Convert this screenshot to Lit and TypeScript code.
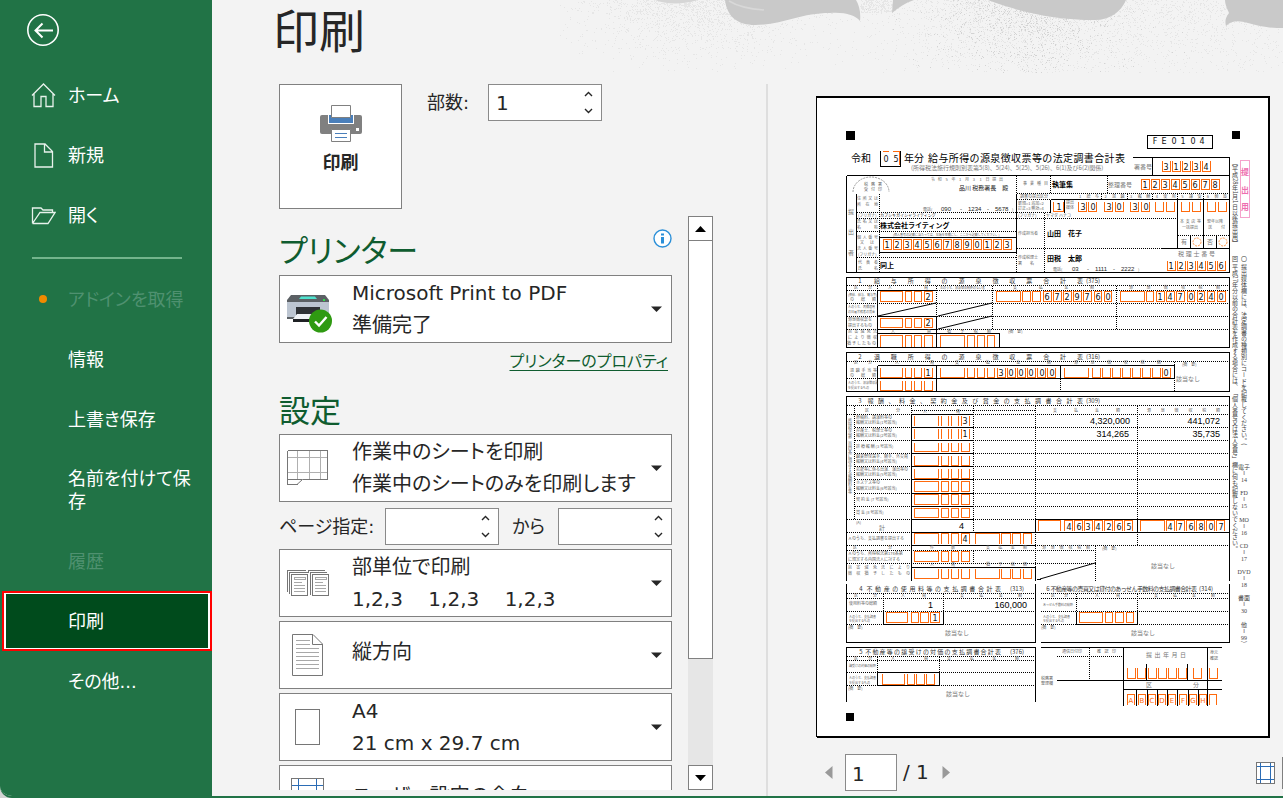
import { LitElement, html, svg, css } from "lit";
import { customElement, state } from "lit/decorators.js";
import { classMap } from "lit/directives/class-map.js";

type Box = [number, number];

/* ---------- helpers for the previewed tax form ---------- */

// Characters spread evenly between two x positions (distributed alignment).
const spread = (text: string, x1: number, x2: number, y: number, cls = "tiny") => {
  const chars = [...text];
  const step = chars.length > 1 ? (x2 - x1) / (chars.length - 1) : 0;
  return svg`<text class=${cls} text-anchor="middle" y=${y} x=${chars.map((_, i) => Math.round((x1 + step * i) * 10) / 10).join(" ")}>${text}</text>`;
};
const put = (text: string, x: number, y: number, cls = "tiny") => svg`<text class=${cls} x=${x} y=${y}>${text}</text>`;
const digits = (text: string, xs: number[], y: number) =>
  svg`<text class="digit" text-anchor="middle" y=${y} x=${xs.join(" ")}>${text}</text>`;
const comb = (start: number, count: number, step = 10): number[] =>
  Array.from({ length: count }, (_, i) => start + Math.round(i * step));

// Entry cells: "o" closed, "u" open at the top, "n" open at the bottom, "v" sides only.
const cells = (boxes: Box[], y1: number, y2: number, kind = "o") =>
  boxes
    .map(([a, b]) => {
      if (kind === "u") return `M${a} ${y1}V${y2}H${b}V${y1}`;
      if (kind === "n") return `M${a} ${y2}V${y1}H${b}V${y2}`;
      if (kind === "v") return `M${a} ${y1}V${y2}M${b} ${y1}V${y2}`;
      return `M${a} ${y1}H${b}V${y2}H${a}z`;
    })
    .join("");
const run = (start: number, count: number): Box[] => comb(start, count).map((x) => [x, x + 8] as Box);

const COUNT: Box[] = [[880, 902], [905, 911], [914, 921], [924, 932]];
const SUM: Box[] = [[940, 964], [967, 974], [977, 984], [987, 994]];
const ROW3: Box[] = [[914, 938], [941, 948], [951, 958], [961, 969]];
const ROW3B: Box[] = [[975, 999], [1001, 1010], [1012, 1020], [1023, 1031]];

const ORANGE = [
  "M882 151H888M892 151H899V164",
  cells(run(1162, 5), 160, 171, "u"),
  cells(run(1141, 8), 179, 189),
  cells([[1053, 1063], [1078, 1086], [1088, 1096], [1104, 1112], [1115, 1123], [1130, 1138], [1141, 1149], [1155, 1163], [1166, 1174], [1181, 1189], [1192, 1200], [1207, 1215], [1218, 1226]], 201, 211, "u"),
  cells(run(1167, 6), 260, 270, "u"),
  cells(run(883, 13), 239, 249),
  cells(COUNT, 291, 301),
  cells(COUNT, 318, 327),
  cells(COUNT, 335, 346, "n"),
  cells(SUM, 335, 346, "n"),
  cells([[996, 1020], [1022, 1030], [1032, 1040], ...run(1043, 5), [1094, 1101], [1104, 1111]], 291, 301),
  cells([[1120, 1144], [1146, 1153], ...run(1156, 3), [1187, 1194], [1197, 1204], [1207, 1214], [1217, 1225]], 291, 301),
  cells(COUNT, 367, 377, "u"),
  cells(COUNT, 380, 390, "u"),
  cells([...SUM, ...run(997, 6)], 367, 377, "u"),
  cells([[1064, 1088], ...run(1092, 8)], 367, 377, "u"),
  cells(ROW3, 415, 425, "v"),
  cells(ROW3, 428, 438, "v"),
  cells(ROW3, 442, 451, "u"),
  cells(ROW3, 455, 465, "u"),
  cells(ROW3, 468, 478, "u"),
  cells(ROW3, 481, 491),
  cells(ROW3, 494, 504),
  cells(ROW3, 508, 517),
  cells([[1038, 1060], ...run(1064, 7)], 520, 530, "n"),
  cells([[1140, 1164], ...run(1166, 6)], 520, 530, "n"),
  cells([...ROW3, ...ROW3B], 533, 543, "n"),
  cells(ROW3, 551, 561),
  cells([...ROW3, ...ROW3B], 568, 578, "u"),
  cells([[886, 907], [911, 918], [920, 928], [930, 939]], 612, 622),
  cells([[1079, 1102], [1105, 1112], [1115, 1123], [1126, 1133]], 612, 622),
  cells([[882, 904], [907, 914], [916, 924], [926, 934]], 673, 684, "u"),
  cells([[1127, 1135], [1137, 1145], [1148, 1156], [1158, 1166], [1168, 1176], [1178, 1186], [1193, 1201], [1209, 1217]], 667, 678, "u"),
  cells([[1127, 1134], [1138, 1145], [1148, 1155], [1158, 1165], [1168, 1175], [1179, 1186], [1189, 1196], [1199, 1206], [1209, 1216]], 694, 704, "n"),
].join("");

const SOLID = [
  "M880 150V166H900V150M1147 135H1212V148H1147z",
  "M1132 157H1229V272M1152 157V175M846 175H1229M846 175V272H1229",
  "M856 193V272M879 237H1016V252H879zM1016 193V252",
  "M1050 199H1229M1050 199V212M1064 199V212M1160 248H1229M1177 199V248M1203 199V248M1190 235V248M1216 235V248",
  "M846 277H1229V347H846zM877 290V347M936 316V347M877 316H936M877 329H936M877 333H999V347M877 290H936",
  "M846 352H1229V391H846zM877 365H1174V378H877M877 365V391M936 365V391M1060 365V378",
  "M846 580V396H1229V580M911 414V580M911 414H973M911 427H973M911 440H973M911 453H973M911 466H973M911 479H973M911 493H973M911 506H973",
  "M911 519H973M1035 519H1229M911 532H1229M1035 519V532M1137 519V532M911 545H1035M911 567H1035V580M1036 579H1040",
  "M846 583V642H1035V583M883 611V624H943V611M1040 642H1229V583M1076 611V624H1137V611",
  "M846 701V647H1035V701M877 672H939V685H877z",
  "M1040 647H1221M1056 680H1221M1123 647V705M1207 647V705M1123 689H1221M1146 663V680M1187 663V680",
  "M1136 689V705M1147 689V705M1157 689V705M1167 689V705M1177 689V705M1188 689V705M1198 689V705",
].join("");
const DIAGONALS = "M878 316L936 303M938 316L992 303M938 329L992 316M1040 579L1095 563";

const DOTTED = [
  "M879 193V237M879 252V272M856 212H1016M856 218H1016M856 231H1016M856 257H1016M1016 175V193M1016 252V272",
  "M1016 193H1229M1016 199H1050M1016 212H1050M1016 218H1175M1016 248H1160M1044 212V272M1177 235H1229M1050 175V193M1107 175V193",
  "M1101 193V199M1127 193V199M1152 193V199M1177 193V199M1203 193V199",
  "M846 285H1229M846 290H1229M846 303H1229M846 316H1229M846 329H1229M877 285V290M936 285V316M992 285V329M1116 285V329",
  "M846 361H1229M846 378H878M1060 378V391M1174 361V391",
  "M846 405H1229M911 410H1035M846 414H1229M854 427H1229M854 440H1229M854 453H1229M854 466H1229M854 479H1229M854 493H1229M854 506H1229M846 519H1035",
  "M854 405V519M911 405V414M973 405V532M1035 405V580M1137 405V545M846 532H911M846 545H1229M846 550H1095M846 563H1095M1095 545V580M973 550V563",
  "M846 593H1035M846 598H1035M846 611H1035M846 624H1035M883 593V611M943 593V611",
  "M1040 593H1229M1040 598H1229M1040 611H1229M1040 624H1229M1076 593V611M1137 593V624",
  "M846 656H1035M846 660H1035M846 672H1035M846 685H1035M877 656V672M939 656V672M1056 656H1121M1089 647V680",
].join("");

const ROW_LABELS: [string, number][] = [
  ["原稿料、講演料等の", 419], ["報酬又は料金(1号該当)", 424],
  ["弁護士、税理士等の", 432], ["報酬又は料金(2号該当)", 437],
  ["診 療 報 酬 (3 号該当)", 448],
  ["職業野球選手、騎手、外交員", 458], ["報酬又は料金(4号該当)", 463],
  ["芸能等に係る出演、演出等の", 471], ["報酬又は料金(5号該当)", 476],
  ["ホステス等の", 484], ["報酬又は料金(6号該当)", 490],
  ["契 約 金 (7 号該当)", 501], ["賞 金 (8 号該当)", 514],
];

const form = svg`
  <rect class="sheet" x="816" y="96" width="454" height="642"></rect>
  <path d="M846 131h9v9h-9zM1232 131h8v8h-8zM846 713h8v8h-8z"></path>
  <g class="lines" transform="translate(.5 .5)">
    <path class="cell" d=${ORANGE}></path>
    <path class="dot" d=${DOTTED}></path>
    <path class="solid" d=${SOLID}></path>
  </g>
  <path class="solid slant" d=${DIAGONALS}></path>
  <path class="arc" d="M853 192a18 15 0 0 1 36 0"></path>
  <circle class="ring" cx="1197" cy="242" r="4"></circle>
  <circle class="ring" cx="1223" cy="242" r="4"></circle>

  ${digits("FE0104", comb(1155, 6, 9.4), 144)}
  ${put("令和", 851, 162, "title")}
  ${digits("05", [886, 896], 162)}
  ${put("年分", 904, 162, "title")}
  ${spread("給与所得の源泉徴収票等の法定調書合計表", 933, 1120, 162, "title")}
  ${put("(所得税法施行規則別表第5(8)、5(24)、5(25)、5(26)、6(1)及び6(2)関係)", 911, 170, "note")}
  ${put("署番号", 1134, 169, "note")}
  ${digits("31234", comb(1166, 5), 170)}
  ${put("整理番号", 1108, 187, "note")}
  ${digits("12345678", comb(1145, 8), 188)}
  ${spread("令和5年1月31日提出", 933, 1001, 181)}
  ${put("品川 税務署長　殿", 959, 190, "note dark")}
  ${spread("税務署", 866, 880, 186)}
  ${spread("受付印", 866, 880, 191)}
  ${spread("事業種目", 1025, 1046, 185)}
  ${put("執筆集", 1052, 187, "bold")}
  ${put("提", 848, 214, "note")}${put("出", 848, 234, "note")}${put("者", 848, 255, "note")}
  ${spread("住所又は", 859, 876, 200)}${spread("所在地", 859, 876, 206)}
  ${put("電話(", 923, 211)}
  ${put("090", 941, 211, "phone")}${put("-", 960, 211, "phone")}${put("1234", 968, 211, "phone")}${put("-", 987, 211, "phone")}${put("5678", 995, 211, "phone")}${put(")", 1012, 211)}
  ${put("(フリガナ)", 858, 217)}${put("カブシキガイシャライティング", 880, 217, "tiny dark")}
  ${spread("氏名又は", 859, 876, 223)}${spread("名称", 859, 876, 229)}
  ${put("株式会社ライティング", 880, 228, "bold")}
  ${put("(個人番号の記載に当たっては、左端を空欄にし、ここから記載してください。)", 893, 236, "mini")}
  ${spread("個人番号", 859, 876, 239)}${spread("又は", 862, 872, 244)}${spread("法人番号", 859, 876, 250)}
  ${digits("1234567890123", comb(887, 13), 248)}
  ${put("(フリガナ)", 858, 256)}
  ${spread("代表者", 860, 876, 264)}${spread("氏名", 860, 876, 270)}
  ${put("同上", 880, 268, "bold")}
  ${put("調書の提出区分", 1020, 198)}${put("新規=1 追加=2", 1018, 205)}${put("訂正=3 無効=4", 1018, 210)}
  ${digits("1", [1059], 210)}
  ${put("提出", 1066, 204)}${put("媒体", 1066, 209)}
  ${spread("1給与2退職3報酬4使用5譲受6斡旋", 1080, 1225, 198)}
  ${digits("303030", [1083, 1093, 1109, 1119, 1135, 1146], 210)}
  ${put("(フリガナ)", 1018, 217)}${put("ヤマダ ハナコ", 1046, 217)}
  ${put("作成担当者", 1018, 235)}${put("山田　花子", 1047, 236, "bold")}
  ${spread("本支店等", 1182, 1199, 223)}${put("一括提出", 1182, 229)}
  ${put("翌年以降", 1207, 223)}${spread("送付", 1210, 1223, 229)}
  ${put("有", 1181, 244, "note")}${put("否", 1207, 244, "note")}
  ${spread("税理士番号", 1181, 1212, 256, "note")}
  ${put("作成税理士", 1018, 259)}${put("署　　名", 1018, 265)}
  ${put("田税　太郎", 1047, 261, "bold")}
  ${put("電話(", 1053, 271)}
  ${put("03", 1072, 271, "phone")}${put("-", 1087, 271, "phone")}${put("1111", 1095, 271, "phone")}${put("-", 1113, 271, "phone")}${put("2222", 1121, 271, "phone")}${put(")", 1138, 271)}
  ${digits("123456", comb(1171, 6), 269)}

  ${spread("1給与所得の源泉徴収票合計表", 860, 1080, 283, "head")}${put("(375)", 1086, 283, "head")}
  ${spread("区分", 856, 870, 289)}${spread("人員", 890, 926, 289)}${put("左のうち、源泉徴収税額のない者", 940, 289, "mini")}
  ${spread("支払金額", 1015, 1092, 289)}${spread("源泉徴収税額", 1131, 1218, 289)}
  ${put("(俸給、給与、賞与等)", 848, 296, "mini")}${spread("の総額", 852, 874, 301)}
  ${put("Ａのうち、丙欄適用", 848, 308, "mini")}${put("の日雇労務者の賃金", 848, 313, "mini")}
  ${put("源泉徴収票を", 848, 321)}${put("提出するもの", 848, 327)}
  ${spread("災害減免法", 850, 875, 333)}${spread("により徴収", 850, 875, 339)}${spread("猶予したもの", 849, 874, 345)}
  ${spread("人員", 893, 929, 333)}${spread("猶予税額", 949, 989, 333)}${put("(摘　要)", 1008, 333)}
  ${digits("2", [928], 300)}${digits("2", [928], 326)}
  ${digits("6729760", [1047, 1057, 1067, 1077, 1087, 1098, 1108], 300)}
  ${digits("1470240", [1160, 1170, 1180, 1191, 1201, 1211, 1221], 300)}

  ${spread("2退職所得の源泉徴収票合計表", 860, 1080, 359, "head")}${put("(316)", 1086, 359, "head")}
  ${spread("区分", 856, 870, 364)}${spread("人員", 897, 932, 364)}${spread("支払金額", 957, 1049, 364)}${spread("源泉徴収税額", 1076, 1159, 364)}
  ${put("(摘　要)", 1182, 366)}
  ${spread("退職手当等", 852, 875, 372)}${spread("の総額", 852, 874, 377)}
  ${put("Ａのうち、源泉徴収票", 848, 384, "mini")}${put("を提出するもの", 848, 389, "mini")}
  ${digits("1", [928], 376)}
  ${digits("300000", [1001, 1011, 1021, 1031, 1042, 1052], 376)}${digits("0", [1166], 376)}
  ${put("該当なし", 1176, 381, "note")}

  ${spread("3報酬、料金、契約金及び賞金の支払調書合計表", 860, 1080, 403, "head")}${put("(309)", 1086, 403, "head")}
  ${spread("区分", 867, 898, 412)}${spread("人員", 925, 958, 413)}${spread("支払金額", 1055, 1118, 412)}${spread("源泉徴収税額", 1149, 1218, 412)}
  ${ROW_LABELS.map(([t, y]) => put(t, 856, y))}
  <text class="tiny upright" x="850" y="418">所得税法第二百四条に規定する報酬料金等</text>
  ${digits("3", [965], 424)}${digits("1", [965], 437)}
  ${put("4,320,000", 1130, 424, "amount")}${put("441,072", 1220, 424, "amount")}
  ${put("314,265", 1129, 437, "amount")}${put("35,735", 1220, 437, "amount")}
  ${put("(A)", 856, 524)}${put("計", 879, 530, "note")}${put("4", 964, 529, "amount")}
  ${digits("4634265", [1069, 1079, 1088, 1098, 1109, 1119, 1129], 530)}
  ${digits("476807", [1170, 1180, 1191, 1201, 1211, 1221], 530)}
  ${put("Ａのうち、支払調書を提出する", 848, 540)}${digits("4", [965], 542)}
  ${spread("区分", 855, 890, 549)}${spread("件数", 932, 953, 549)}${spread("支払金額", 988, 1025, 549)}${spread("源泉徴収税額", 1044, 1088, 549)}
  ${put("Ａのうち、所得税法第174条第", 848, 555)}${put("に規定する内国法人に対する", 848, 561)}
  ${spread("災害減免法により", 850, 908, 569)}${spread("徴収猶予したもの", 850, 908, 575)}
  ${spread("人員", 932, 953, 566)}${spread("猶予税額", 988, 1025, 566)}
  ${put("(摘　要)", 1102, 550)}${put("該当なし", 1151, 568, "note")}

  ${spread("4不動産の使用料等の支払調書合計表", 861, 998, 591, "head")}${put("(313)", 1010, 591, "head")}
  ${spread("6不動産等の売買又は貸付のあっせん手数料の支払調書合計表", 1048, 1194, 591, "head")}${put("(314)", 1199, 591, "head")}
  ${spread("区分", 856, 875, 597)}${spread("人員", 903, 924, 597)}${spread("支払金額", 962, 1020, 597)}
  ${spread("区分", 1053, 1066, 597)}${spread("人員", 1097, 1118, 597)}${spread("支払金額", 1156, 1213, 597)}
  ${put("使用料等の総額", 849, 605)}${put("あっせん手数料の総額", 1043, 606, "mini")}
  ${put("Ａのうち、支払調書", 849, 618, "mini")}${put("を提出するもの", 849, 622, "mini")}
  ${put("Ａのうち、支払調書", 1043, 618, "mini")}${put("を提出するもの", 1043, 622, "mini")}
  ${put("1", 933, 608, "amount")}${put("160,000", 1027, 608, "amount")}${digits("1", [935], 621)}
  ${put("(摘　要)", 848, 629)}${put("該当なし", 945, 635, "note")}
  ${put("(摘　要)", 1041, 629)}${put("該当なし", 1131, 635, "note")}

  ${spread("5不動産等の譲受けの対価の支払調書合計表", 861, 998, 654, "head")}${put("(376)", 1010, 654, "head")}
  ${spread("区分", 856, 870, 660)}${spread("人員", 893, 926, 660)}${spread("支払金額", 949, 1017, 660)}
  ${put("譲受けの対価の総額", 849, 667, "mini")}${put("Ａのうち、支払調書", 849, 679, "mini")}${put("を提出するもの", 849, 684, "mini")}
  ${put("(摘　要)", 848, 690)}${put("該当なし", 946, 696, "note")}

  ${put("通信日付印", 1062, 653)}${spread("確認印", 1099, 1114, 653)}
  ${put("税務署", 1041, 680)}${put("整理欄", 1041, 685)}
  ${spread("提出年月日", 1149, 1183, 657, "note")}${put("身元", 1210, 654)}${put("確認", 1210, 660)}
  ${spread("区分", 1149, 1196, 687, "note")}
  <text class="letter" text-anchor="middle" y="703" x="1131 1142 1152 1162 1172 1183 1193 1203">ABCDEFGH</text>

  <rect class="tag" x="1240.5" y="160.5" width="9" height="57"></rect>
  <text class="pink" text-anchor="middle" x="1245" y="175">提</text>
  <text class="pink" text-anchor="middle" x="1245" y="193">出</text>
  <text class="pink" text-anchor="middle" x="1245" y="210">用</text>
  <text class="column" x="1235" y="160">【平成28年1月1日以後提出用】</text>
  <text class="column" x="1235" y="256">回 平成27年分以前の合計表を作成する場合には、「個人番号又は法人番号」欄に何も記載しないでください。</text>
  <text class="column" x="1244" y="256">〇 提出媒体欄には、法定調書の種類別にコードを記載してください。(</text>
  ${([["電子", 469, "14"], ["FD", 495, "15"], ["MO", 522, "16"], ["CD", 548, "17"], ["DVD", 574, "18"], ["書面", 600, "30"], ["他", 627, "99"]] as [string, number, string][]).map(
    ([t, y, n]) => svg`<text class="code" text-anchor="middle"><tspan x="1244" y=${y}>${t}</tspan><tspan x="1244" y=${y + 6}>‖</tspan><tspan x="1244" y=${y + 13}>${n}</tspan></text>`
  )}
  <text class="column" x="1244" y="641">)</text>
`;

/* ---------- speckled artwork behind the heading ---------- */

const speckles = (() => {
  let seed = 987654321;
  const rnd = () => {
    seed ^= seed << 13;
    seed ^= seed >>> 17;
    seed ^= seed << 5;
    return (seed >>> 0) / 4294967296;
  };
  const hump = (x: number, c: number, w: number) => Math.exp(-(((x - c) / w) ** 2));
  let light = "";
  let dark = "";
  for (let y = 0; y < 73; y++) {
    for (let x = 560; x < 1283; x++) {
      const fade = 1 - y / 85;
      const band = x > 860 && x < 893 && y < 13 ? 0.4 : 0;
      const density = (0.42 * hump(x, 1030, 95) + 0.36 * hump(x, 700, 90) * fade + 0.14 * hump(x, 1220, 80) + band) * fade;
      if (rnd() < density) {
        if (rnd() < 0.3 * hump(x, 1025, 80)) dark += `M${x} ${y}h1v1h-1z`;
        else light += `M${x} ${y}h1v1h-1z`;
      }
    }
  }
  return { light, dark };
})();

const artwork = html`<svg class="art" viewBox="560 0 723 84" width="723" height="84" aria-hidden="true">
  <path fill="#e6e6e6" d=${speckles.light}></path>
  <path fill="#d3d3d3" d=${speckles.dark}></path>
  <path fill="#d6d6d6" d="M655 0C665 4 682 5 698 0z"></path>
  <path fill="#c9c9c9" d="M725 0C727 17 738 25 755 25C782 25 800 13 830 13C845 12 855 15 860 21C861 12 859 5 856 0zM893 0L892 13C898 8 905 3 914 0zM988 0C1020 12 1055 20 1095 20C1110 20 1121 12 1126 0zM1225 0C1225 5 1228 10 1229 13C1225 18 1225 22 1226 26C1235 17 1246 23 1260 26C1270 28 1277 28 1283 28V0z"></path>
  <path fill="none" stroke="#d8d8d8" stroke-width="1.500" d="M729 1C737 6 750 9 764 10"></path>
</svg>`;

/* ---------- icons ---------- */

const icons: Record<string, unknown> = {
  home: svg`<path d="M1 12.5L12.5 1L24 12.5M3 11V23.5H10V13.5H15V23.5H22V11"></path>`,
  file: svg`<path d="M4 1H14L21.500 8.500V24H4zM13.500 1V9H21.500"></path>`,
  folder: svg`<path d="M1.500 20.500V5H10L12 7H21.500V9.500M1.500 20.500H17L24 9.500H9L1.500 20.500"></path>`,
  dot: svg`<circle class="orange" cx="12" cy="12" r="4"></circle>`,
};

const deviceIcon = svg`
  <path d="M5 17V15L9 10H43L47 15V17z" fill="#5b6064"></path>
  <path d="M17 14L19 11.500H33L35 14z" fill="#4fe3cf"></path>
  <rect x="41" y="14" width="2" height="2" fill="#2fe04b"></rect>
  <path d="M5 17H47V32H5z" fill="#bcc5d1"></path>
  <path d="M5 32H47V34H5z" fill="#5b6064"></path>
  <path d="M14 22H38V30H14z" fill="#2f3236"></path>
  <path d="M15 29H38V34H11z" fill="#f1f4f7"></path>
  <path d="M11 34H32V37H11z" fill="#1f2124"></path>
  <circle cx="38.500" cy="36" r="11.500" fill="#2f9a12"></circle>
  <path d="M33 36.500L37 40.500L44.500 32" fill="none" stroke="#fff" stroke-width="2.400"></path>`;

const sheetIcon = svg`<g transform="translate(0 -4)"><g fill="none" stroke="#b0b0b0" shape-rendering="crispEdges">
    <path d="M15.500 10V39M27.500 10V39M38.500 10V39M5 17.500H45M5 32.500H45"></path>
    <path stroke="#767676" d="M5.500 10.500H45.500V39.500H20.500M5.500 10.500V44.500H15.500"></path></g>
    <path d="M15 44.500L20.500 39.500H5.500" fill="none" stroke="#767676"></path></g>`;

const collateIcon = svg`<g fill="none" stroke="#767676" shape-rendering="crispEdges">
    <path d="M5.500 33V11.500H24M7.500 35V13.500H26M26.500 14V11.500H43M28.500 36V13.500H45"></path>
    <path fill="#fff" d="M9.500 15.500H25.500V36.500H9.500zM30.500 15.500H46.500V36.500H30.500z"></path>
    <path stroke="#a8a8a8" d="M12 18.500H23V20.500H12zM12 23.500H20M12 26.500H23M12 29.500H23M12 32.500H23M33 18.500H44V20.500H33zM33 23.500H41M33 26.500H44M33 29.500H44M33 32.500H44"></path></g>`;

const portraitIcon = svg`<g fill="none" stroke="#767676">
    <path d="M10.500 3.500H31L40.500 13V44.500H10.500z"></path><path d="M30.500 3.500V13.500H40.500"></path>
    <path stroke="#a8a8a8" shape-rendering="crispEdges" d="M14 9.500H28M14 13.500H28M14 17.500H37M14 21.500H37M14 25.500H37M14 29.500H37M14 33.500H37M14 37.500H37"></path></g>`;

const paperIcon = svg`<path d="M13.500 6.500H37.500V41.500H13.500z" fill="none" stroke="#767676" shape-rendering="crispEdges"></path>`;

const marginIcon = svg`<g fill="none" shape-rendering="crispEdges"><path stroke="#767676" d="M9.500 3.500H41.500V45.500H9.500z"></path>
    <path stroke="#2b6cb5" d="M16.500 4V45M34.500 4V45M10 10.500H41M10 38.500H41"></path></g>`;

interface Choice { label: string; icon: unknown; options: string[]; sub?: string }

@customElement("app-root")
export class AppRoot extends LitElement {
  @state() private copies = 1;

  static styles = css`
    :host {
      display: block;
      height: 100vh;
      background: #d3d3d3;
      color: #262626;
      font: 18px/23px "DejaVu Sans", "Noto Sans CJK JP", sans-serif;
      font-feature-settings: "palt";
    }
    * { box-sizing: border-box; }
    button, input, select { font: inherit; color: inherit; font-feature-settings: inherit; margin: 0; border-radius: 0; }
    .window { display: flex; height: 100%; background: #f3f3f3; border-bottom: 2px solid #217346; border-bottom-left-radius: 12px; overflow: hidden; }

    .side { flex: 0 0 212px; background: #217346; color: #fff; }
    .back { display: block; width: 34px; height: 34px; margin: 13px 0 18px 26px; padding: 0; border: 0; background: none; }
    .back svg { display: block; fill: none; stroke: #fff; stroke-width: 2; }
    .item { display: flex; align-items: center; width: 100%; min-height: 60px; padding: 0 18px 0 31px; border: 0; background: none; color: #fff; text-align: left; gap: 12px; }
    .item svg { flex: none; fill: none; stroke: #e8f2ec; stroke-width: 1.3; }
    .item .orange { fill: #f08a00; stroke: none; }
    .item.tall { padding-top: 18px; padding-bottom: 18px; }
    .item:disabled { color: #4f9170; }
    .item.current { width: auto; margin-left: 2px; height: 60px; border: 2px solid #f00; padding: 0; align-items: stretch; background: #fff; }
    .fill { display: flex; align-items: center; width: 202px; margin: 1px 2px; padding-left: 62px; background: #004b1c; }
    .rule { height: 2px; margin: 12px 30px 10px 32px; border: 0; background: #73b48c; }

    .main { flex: 1; min-width: 0; display: flex; flex-direction: column; }
    .top { display: grid; height: 84px; flex: none; }
    .top > * { grid-area: 1 / 1; }
    .top h1 { margin: 0; padding-left: 61px; font-size: 46px; line-height: 64px; font-weight: 400; }
    .art { justify-self: end; max-width: 100%; }
    .body { flex: 1; min-height: 0; display: flex; }

    .left { flex: 0 0 434px; margin-left: 67px; display: flex; flex-direction: column; min-height: 0; }
    .start { display: flex; gap: 25px; flex: none; }
    .print { width: 123px; height: 125px; border: 1px solid #808080; background: #fff; padding: 20px 0 0; display: flex; flex-direction: column; align-items: center; gap: 9px; font-weight: 700; }
    .copies { display: flex; height: 37px; align-items: center; gap: 19px; }
    .spin { display: flex; width: 114px; height: 37px; border: 1px solid #8a8a8a; background: #fff; }
    .spin input { flex: 1; min-width: 0; border: 0; padding: 2px 0 0 7px; background: none; font-size: 20px; outline: 0; }
    .steps { display: grid; width: 26px; }
    .steps button { border: 0; background: none; padding: 0; display: grid; place-items: center; }
    .steps svg { fill: none; stroke: #262626; stroke-width: 1.4; }

    .scroller { flex: 1; min-height: 0; display: flex; justify-content: space-between; margin: 7px 0 6px; }
    .settings { width: 393px; overflow: hidden; }
    .heading { display: flex; justify-content: space-between; margin: 0; height: 59px; padding-top: 11px; }
    h2 { margin: 0; font-size: 31px; line-height: 48px; font-weight: 400; color: #0f5c2f; }
    .info { margin: 2px 0 0; width: 19px; height: 19px; padding: 0; border: 0; background: none; }
    .info svg { display: block; }
    .properties { display: block; width: max-content; margin: 7px 4px 14px auto; font-size: 16px; color: #0f5c2f; text-underline-offset: 3px; }
    .settings > h2 { height: 47px; }

    .choice { display: grid; grid-template-columns: 72px 1fr 31px; height: 68px; border: 1px solid #808080; background: #fff; font-size: 20px; line-height: 33px; margin-bottom: 4px; }
    .choice select { grid-area: 1 / 1 / 2 / 4; appearance: none; border: 0; background: none; padding: 1px 36px 32px 72px; outline: 0; }
    .choice.single select { padding-bottom: 6px; }
    .choice .pic { grid-area: 1 / 1; align-self: center; margin-left: 2px; pointer-events: none; }
    .choice .sub { grid-area: 1 / 2; align-self: end; pointer-events: none; white-space: pre; }
    .choice .arrow { grid-area: 1 / 3; align-self: center; margin-left: 11px; pointer-events: none; }
    .range { display: grid; grid-template-columns: 106px 114px 1fr 114px; align-items: center; margin: 6px 0 4px; }
    .until { text-align: center; }
    .choice.first { margin-bottom: 0; }

    .bar { width: 25px; display: flex; flex-direction: column; background: #e6e6e6; }
    .bar button { flex: none; height: 25px; border: 1px solid #808080; background: #fff; padding: 0; display: grid; place-items: center; }
    .thumb { flex: 0 1 419px; margin-top: -1px; border: 1px solid #808080; background: #fff; }
    .space { flex: 1; }

    .preview { flex: 1; min-width: 0; margin-left: 53px; border-left: 2px solid #dedede; display: flex; flex-direction: column; padding: 12px 0 0; }
    .stage { flex: 1; min-height: 0; padding-right: 13px; }
    .paper { display: block; width: 100%; height: 100%; font-family: "Noto Sans CJK JP", sans-serif; font-feature-settings: normal; }
    .sheet { fill: #fff; }
    .lines path { fill: none; shape-rendering: crispEdges; }
    .lines .cell { stroke: #ff6a0d; }
    .lines .dot { stroke: #000; stroke-dasharray: 1 1; }
    .solid { fill: none; stroke: #000; }
    .arc { fill: none; stroke: #999; stroke-dasharray: 2 1; }
    .ring { fill: none; stroke: #ff9a4d; stroke-dasharray: 2 1; }
    .title { font-size: 10px; fill: #000; }
    .head { font-size: 6px; fill: #333; }
    .note { font-size: 6px; fill: #777; }
    .tiny { font-size: 4px; fill: #666; }
    .mini { font-size: 3px; fill: #666; }
    .dark { fill: #222; }
    .bold { font-size: 7px; font-weight: 700; fill: #000; }
    .phone { font: 6px "Liberation Sans", sans-serif; fill: #222; }
    .digit { font: 8px "DejaVu Sans", sans-serif; fill: #111; }
    .amount { font: 9px "Liberation Sans", sans-serif; fill: #000; text-anchor: end; }
    .letter { font: 7px "DejaVu Sans", sans-serif; fill: #ff6a0d; }
    .tag { fill: none; stroke: #f5a3cc; }
    .pink { font-size: 8px; font-weight: 700; fill: #ee6fb0; }
    .column { font-size: 6px; fill: #444; writing-mode: vertical-rl; }
    .upright { writing-mode: vertical-rl; }
    .code { font: 6px "Liberation Serif", "Noto Sans CJK JP", serif; fill: #444; }

    .pager { flex: none; height: 58px; display: flex; align-items: center; padding: 11px 0 0 57px; font-size: 20px; }
    .pager button { border: 0; background: none; padding: 0; display: grid; place-items: center; }
    .pager button svg { display: block; }
    .pager input { width: 52px; height: 37px; margin: 0 6px 0 12px; border: 1px solid #8a8a8a; background: #fff; padding: 2px 0 0 6px; outline: 0; }
    .pager .next { margin-left: 13px; }
    .pager .fit { margin-left: auto; margin-right: 7px; }
    .pager .zoom { width: 1px; height: 32px; background: #808080; }
  `;

  private item(label: string, icon = "", disabled = false, tall = false) {
    return html`<button class=${classMap({ item: true, tall })} ?disabled=${disabled}>
      <svg width="25" height="25" viewBox="0 0 25 25" aria-hidden="true">${icons[icon] ?? ""}</svg><span>${label}</span>
    </button>`;
  }

  private spinner(id: string, label: string, value: string, step?: (d: number) => void) {
    const chevron = (d: string) => html`<svg width="9" height="6" viewBox="0 0 9 6" aria-hidden="true"><path d=${d}></path></svg>`;
    return html`<div class="spin">
      <input id=${id} type="text" inputmode="numeric" aria-label=${label} .value=${value} />
      <div class="steps">
        <button aria-label="増やす" @click=${() => step?.(1)}>${chevron("M1 5L4.500 1.500L8 5")}</button>
        <button aria-label="減らす" @click=${() => step?.(-1)}>${chevron("M1 1L4.500 4.500L8 1")}</button>
      </div>
    </div>`;
  }

  private choice(c: Choice, extra = "") {
    return html`<div class="choice ${extra} ${c.sub ? "" : "single"}">
      <select aria-label=${c.label}>${c.options.map((o) => html`<option>${o}</option>`)}</select>
      <svg class="pic" width="52" height="48" viewBox="0 0 52 48" aria-hidden="true">${c.icon}</svg>
      ${c.sub ? html`<span class="sub">${c.sub}</span>` : ""}
      <svg class="arrow" width="12" height="7" viewBox="0 0 12 7" aria-hidden="true"><path d="M0 .5H11L5.500 6z" fill="#262626"></path></svg>
    </div>`;
  }

  render() {
    return html`<div class="window">
      <nav class="side">
        <button class="back" aria-label="戻る">
          <svg width="34" height="34" viewBox="0 0 34 34"><circle cx="17" cy="17" r="15.200" stroke-width="1.600"></circle><path d="M9.500 17.500H27M16.500 10.500L9.500 17.500L16.500 24.500"></path></svg>
        </button>
        ${this.item("ホーム", "home")}${this.item("新規", "file")}${this.item("開く", "folder")}
        <hr class="rule" />
        ${this.item("アドインを取得", "dot", true)}${this.item("情報")}${this.item("上書き保存")}
        ${this.item("名前を付けて保存", "", false, true)}${this.item("履歴", "", true)}
        <button class="item current" aria-current="page"><span class="fill">印刷</span></button>
        ${this.item("その他...")}
      </nav>
      <main class="main">
        <header class="top">${artwork}<h1>印刷</h1></header>
        <div class="body">
          <section class="left">
            <div class="start">
              <button class="print">
                <svg width="42" height="37" viewBox="0 0 42 37" aria-hidden="true">
                  <rect y="10" width="42" height="19" rx="2" fill="#808080"></rect>
                  <path d="M8 10H34V19H8z" fill="#fff"></path><path d="M9 10H33V18H9z" fill="#4a7fba"></path>
                  <path d="M11.500.5H30.500V12.500H11.500zM11.500 24.500H30.500V36.500H11.500z" fill="#fff" stroke="#808080"></path>
                  <path d="M15 28.500H27M15 32.500H27" stroke="#4a7fba"></path><path d="M36 23h3v3h-3z" fill="#fff"></path>
                </svg>
                <span>印刷</span>
              </button>
              <div class="copies">
                <label for="copies">部数:</label>
                ${this.spinner("copies", "部数", String(this.copies), (d) => (this.copies = Math.max(1, this.copies + d)))}
              </div>
            </div>
            <div class="scroller">
              <div class="settings">
                <div class="heading">
                  <h2>プリンター</h2>
                  <button class="info" aria-label="情報">
                    <svg width="19" height="19" viewBox="0 0 19 19"><circle cx="9.500" cy="9.500" r="8.500" fill="#fff" stroke="#2b8fd8" stroke-width="1.400"></circle><path d="M8 4.500h3v2h-3zM8 8h3v6.500h-3z" fill="#2b8fd8"></path></svg>
                  </button>
                </div>
                ${this.choice({ label: "プリンター", icon: deviceIcon, options: ["Microsoft Print to PDF"], sub: "準備完了" }, "first")}
                <a class="properties" href="#properties">プリンターのプロパティ</a>
                <h2>設定</h2>
                ${this.choice({ label: "印刷対象", icon: sheetIcon, options: ["作業中のシートを印刷"], sub: "作業中のシートのみを印刷します" }, "first")}
                <div class="range">
                  <label for="from">ページ指定:</label>${this.spinner("from", "開始ページ", "")}
                  <label class="until" for="to">から</label>${this.spinner("to", "終了ページ", "")}
                </div>
                ${this.choice({ label: "部単位", icon: collateIcon, options: ["部単位で印刷"], sub: "1,2,3    1,2,3    1,2,3" })}
                ${this.choice({ label: "印刷の向き", icon: portraitIcon, options: ["縦方向"] })}
                ${this.choice({ label: "用紙サイズ", icon: paperIcon, options: ["A4"], sub: "21 cm x 29.7 cm" })}
                ${this.choice({ label: "余白", icon: marginIcon, options: ["ユーザー設定の余白"] })}
              </div>
              <div class="bar">
                <button aria-label="上へ"><svg width="11" height="6" viewBox="0 0 11 6"><path d="M0 6L5.500 0L11 6z"></path></svg></button>
                <div class="thumb"></div><div class="space"></div>
                <button aria-label="下へ"><svg width="11" height="6" viewBox="0 0 11 6"><path d="M0 0L5.500 6L11 0z"></path></svg></button>
              </div>
            </div>
          </section>
          <section class="preview">
            <div class="stage">
              <svg class="paper" viewBox="816 96 454 642" preserveAspectRatio="xMaxYMid meet" role="img" aria-label="印刷プレビュー">
                ${form}
                <path d="M816 96H1270V738H817V737H816zM817 98V736H1268V98z" fill-rule="evenodd"></path>
              </svg>
            </div>
            <div class="pager">
              <button aria-label="前のページ"><svg width="8" height="14" viewBox="0 0 8 14"><path d="M7.500 0V13L0 6.500z" fill="#999"></path></svg></button>
              <input type="text" aria-label="ページ" value="1" /><span>/ 1</span>
              <button class="next" aria-label="次のページ"><svg width="8" height="14" viewBox="0 0 8 14"><path d="M.5 0V13L8 6.500z" fill="#999"></path></svg></button>
              <button class="fit" aria-label="余白の表示"><svg width="19" height="22" viewBox="0 0 19 22" fill="none" shape-rendering="crispEdges"><path fill="#fff" stroke="#767676" d="M.5.5H18.500V21.500H.5z"></path><path stroke="#2b6cb5" d="M4.500 1V21M14.500 1V21M1 4.500H18M1 17.500H18"></path></svg></button>
              <span class="zoom"></span>
            </div>
          </section>
        </div>
      </main>
    </div>`;
  }
}
